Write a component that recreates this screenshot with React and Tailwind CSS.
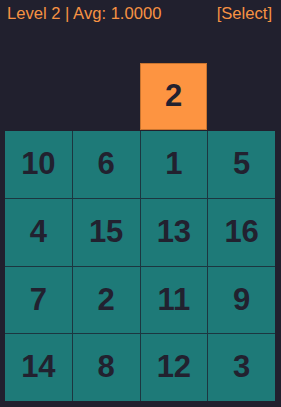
import React from 'react'

const grid = [
  [10, 6, 1, 5],
  [4, 15, 13, 16],
  [7, 2, 11, 9],
  [14, 8, 12, 3],
]

function App() {
  return (
    <div className="w-[281px] h-[407px] bg-[#21202e] font-['Liberation_Sans',Arial,sans-serif] overflow-hidden">
      {/* Header */}
      <div className="flex justify-between items-center pl-[7px] pr-[9px] pt-[5px] h-[24px] text-[16.6px] text-[#f79243]">
        <span>Level 2 | Avg: 1.0000</span>
        <span>[Select]</span>
      </div>

      {/* Current tile */}
      <div className="mt-[39px] ml-[140px] w-[67px] h-[67px] bg-[#fd9441] border border-[#c8742f] flex items-center justify-center text-[31px] font-bold text-[#22212f]">
        2
      </div>

      {/* Board */}
      <div className="mt-px ml-[5px] w-[270px] grid grid-cols-4 gap-px bg-[#1c3640]">
        {grid.flat().map((n, i) => (
          <div
            key={i}
            className="h-[66.75px] bg-[#1e7a78] flex items-center justify-center text-[31px] font-bold text-[#22212f]"
          >
            {n}
          </div>
        ))}
      </div>
    </div>
  )
}

export default App
